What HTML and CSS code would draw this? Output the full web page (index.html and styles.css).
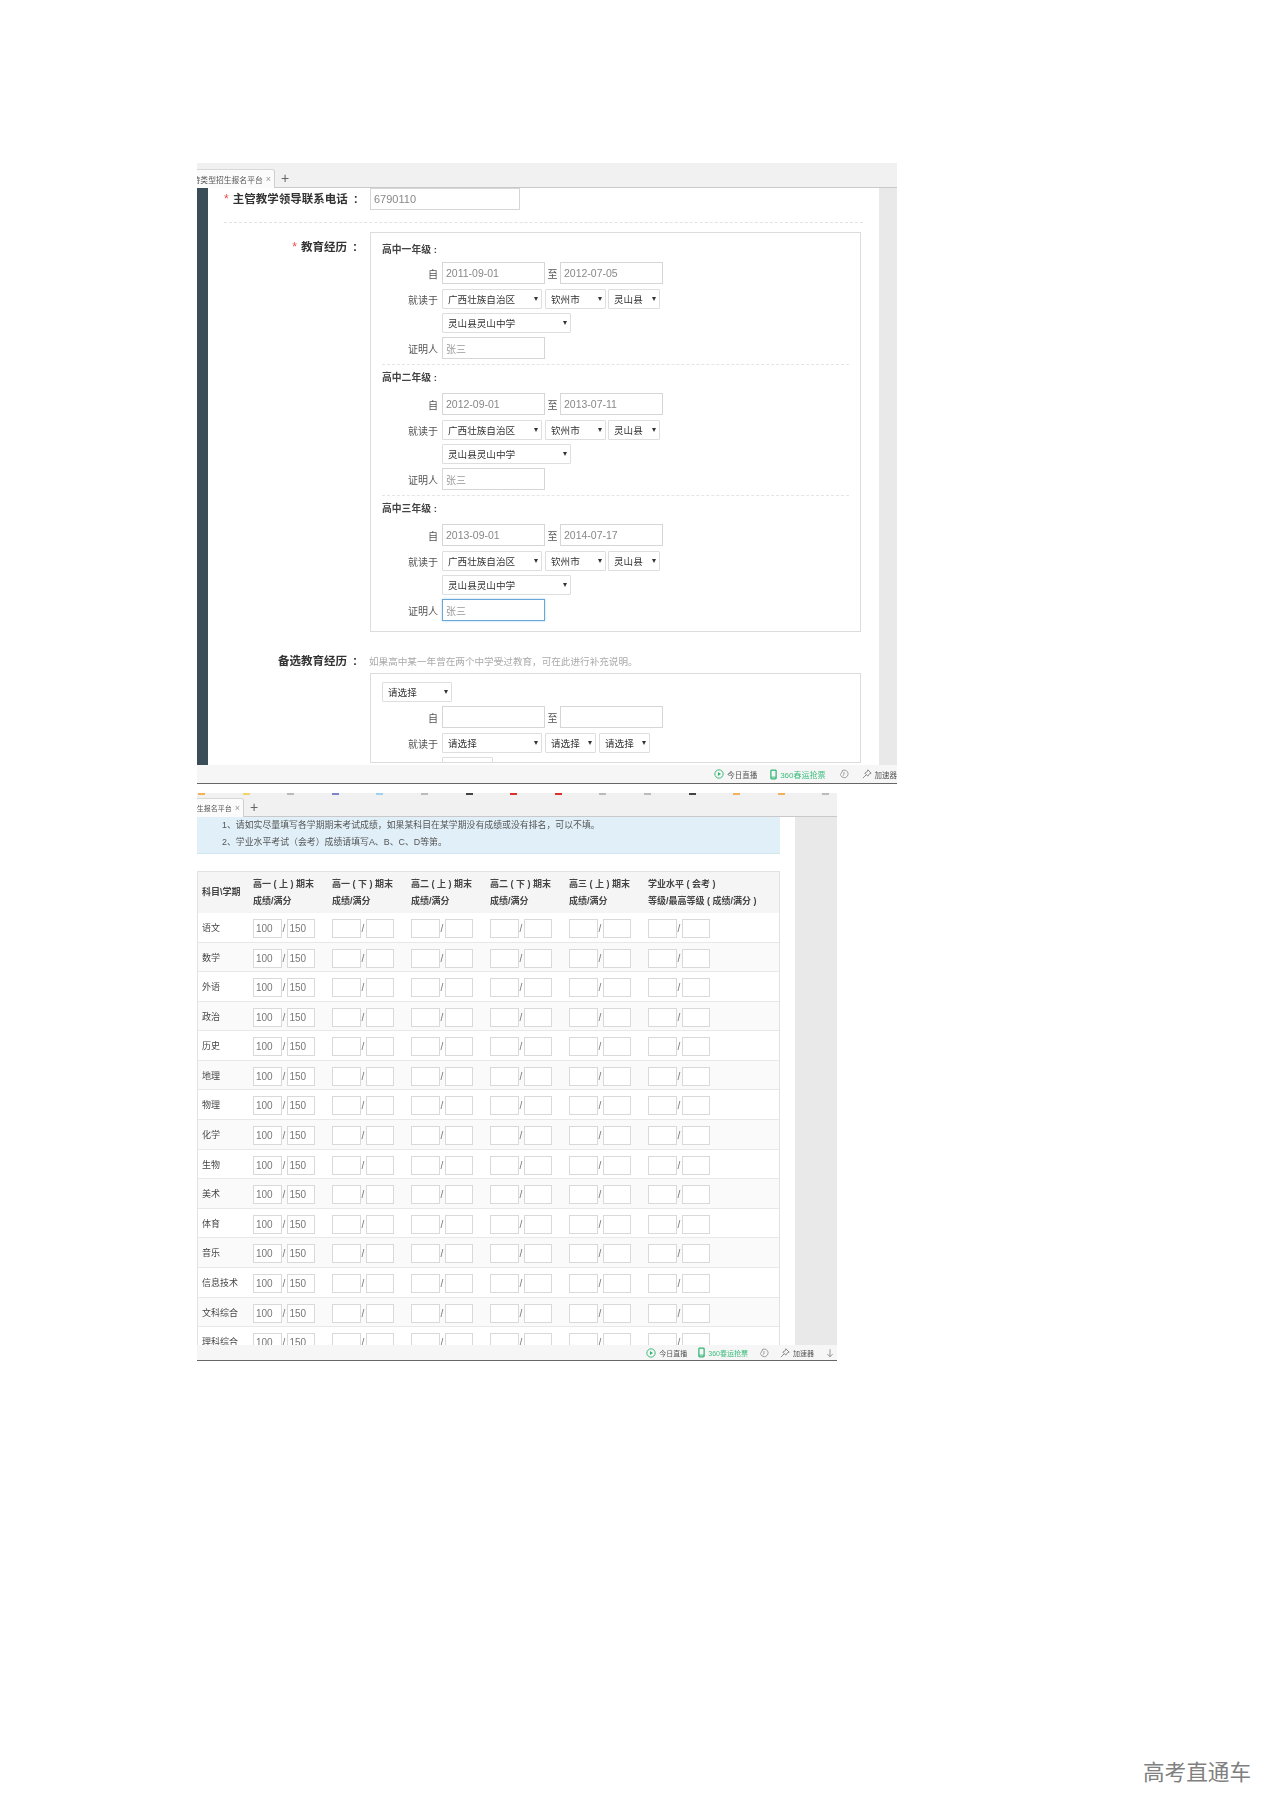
FILE: index.html
```html
<!DOCTYPE html>
<html lang="zh-CN">
<head>
<meta charset="utf-8">
<title>招生报名平台</title>
<link rel="stylesheet" href="styles.css">
</head>
<body>
<main class="page">
  <section class="shot shot-a">
    <header class="tabs">
      <div class="tab tab-a"><span class="tab-text">特类型招生报名平台</span><span class="tab-x">×</span></div>
      <span class="tab-plus">+</span>
    </header>
    <div class="viewport viewport-a">
      <div class="sidebar"></div>
      <div class="form">
        <div class="field-row">
          <div class="main-label"><span class="star">*</span>主管教学领导联系电话<span class="colon">:</span></div>
          <div class="in phone">6790110</div>
        </div>
        <hr class="rule">
        <div class="field-top">
          <div class="main-label"><span class="star">*</span>教育经历<span class="colon">:</span></div>
          <div class="box">
            <div class="grade">
              <h3 class="grade-title first">高中一年级 :</h3>
              <div class="line tall"><span class="lab">自</span><div class="in date">2011-09-01</div><span class="to">至</span><div class="in date">2012-07-05</div></div>
              <div class="line"><span class="lab">就读于</span><div class="sel w100">广西壮族自治区</div><div class="sel w60">钦州市</div><div class="sel w52">灵山县</div></div>
              <div class="line"><span class="lab"></span><div class="sel w129">灵山县灵山中学</div></div>
              <div class="line tall"><span class="lab">证明人</span><div class="in date muted">张三</div></div>
            </div>
            <hr class="inner-rule">
            <div class="grade">
              <h3 class="grade-title">高中二年级 :</h3>
              <div class="line tall"><span class="lab">自</span><div class="in date">2012-09-01</div><span class="to">至</span><div class="in date">2013-07-11</div></div>
              <div class="line"><span class="lab">就读于</span><div class="sel w100">广西壮族自治区</div><div class="sel w60">钦州市</div><div class="sel w52">灵山县</div></div>
              <div class="line"><span class="lab"></span><div class="sel w129">灵山县灵山中学</div></div>
              <div class="line tall"><span class="lab">证明人</span><div class="in date muted">张三</div></div>
            </div>
            <hr class="inner-rule">
            <div class="grade">
              <h3 class="grade-title">高中三年级 :</h3>
              <div class="line tall"><span class="lab">自</span><div class="in date">2013-09-01</div><span class="to">至</span><div class="in date">2014-07-17</div></div>
              <div class="line"><span class="lab">就读于</span><div class="sel w100">广西壮族自治区</div><div class="sel w60">钦州市</div><div class="sel w52">灵山县</div></div>
              <div class="line"><span class="lab"></span><div class="sel w129">灵山县灵山中学</div></div>
              <div class="line tall"><span class="lab">证明人</span><div class="in date muted focus">张三</div></div>
            </div>
          </div>
        </div>
        <div class="field-note">
          <div class="main-label">备选教育经历<span class="colon">:</span></div>
          <p class="note">如果高中某一年曾在两个中学受过教育，可在此进行补充说明。</p>
        </div>
        <div class="box box-alt">
          <div class="grade alt-grade">
            <div class="line"><div class="sel w70">请选择</div></div>
            <div class="line tall"><span class="lab">自</span><div class="in date"></div><span class="to">至</span><div class="in date"></div></div>
            <div class="line"><span class="lab">就读于</span><div class="sel w100">请选择</div><div class="sel w50">请选择</div><div class="sel w51">请选择</div></div>
            <div class="line"><span class="lab"></span><div class="sel w51">请选择</div></div>
          </div>
        </div>
      </div>
      <div class="gutter"></div>
    </div>
    <footer class="status status-a">
      <span class="st"><svg class="ico" viewBox="0 0 12 12"><circle cx="6" cy="6" r="5" fill="none" stroke="#2fb673" stroke-width="1.1"/><path d="M4.7 3.6 8.3 6 4.7 8.4z" fill="#2fb673"/></svg>今日直播</span>
      <span class="st green"><svg class="ico-phone" viewBox="0 0 8 12"><rect x="1" y="1" width="6" height="10" rx="1" fill="none" stroke="#2fb673" stroke-width="1.4"/><path d="M1 9h6" stroke="#2fb673" stroke-width="1"/></svg>360春运抢票</span>
      <svg class="ico" viewBox="0 0 12 12"><path d="M3.5 2.2A4.6 4.6 0 1 1 2 7.5" fill="none" stroke="#777" stroke-width=".8"/><path d="M1.5 7 4.5 2M6 3.5v3.2L4.2 8.4" fill="none" stroke="#777" stroke-width=".8"/></svg>
      <span class="st"><svg class="ico" viewBox="0 0 12 12"><path d="M7 1 11 5 9 5.6 7 8.6 3.4 5 6.4 3zM5 7 1 11" fill="none" stroke="#666" stroke-width=".9"/></svg>加速器</span>
    </footer>
  </section>

  <section class="shot shot-b">
    <div class="marks">
      <span class="mark m-orange"></span><span class="mark m-yellow"></span><span class="mark m-gray"></span><span class="mark m-blue"></span><span class="mark m-sky"></span><span class="mark m-gray"></span><span class="mark m-dark"></span><span class="mark m-red"></span><span class="mark m-red"></span><span class="mark m-gray"></span><span class="mark m-gray"></span><span class="mark m-dark"></span><span class="mark m-orange"></span><span class="mark m-orange"></span><span class="mark m-gray"></span>
    </div>
    <header class="tabs tabs-b">
      <div class="tab tab-b"><span class="tab-text">生报名平台</span><span class="tab-x">×</span></div>
      <span class="tab-plus">+</span>
    </header>
    <div class="viewport viewport-b">
      <div class="sheet">
        <div class="alert">
          <p>1、请如实尽量填写各学期期末考试成绩，如果某科目在某学期没有成绩或没有排名，可以不填。</p>
          <p>2、学业水平考试（会考）成绩请填写A、B、C、D等第。</p>
        </div>
        <div class="table">
          <div class="thead">
            <div class="th-first">科目\学期</div>
            <div>高一 ( 上 ) 期末<br>成绩/满分</div>
            <div>高一 ( 下 ) 期末<br>成绩/满分</div>
            <div>高二 ( 上 ) 期末<br>成绩/满分</div>
            <div>高二 ( 下 ) 期末<br>成绩/满分</div>
            <div>高三 ( 上 ) 期末<br>成绩/满分</div>
            <div class="th-wide">学业水平 ( 会考 )<br>等级/最高等级 ( 成绩/满分 )</div>
          </div>
          <div class="trow"><div class="subj">语文</div><div class="pair"><span class="cell">100</span><i>/</i><span class="cell">150</span></div><div class="pair"><span class="cell"></span><i>/</i><span class="cell"></span></div><div class="pair"><span class="cell"></span><i>/</i><span class="cell"></span></div><div class="pair"><span class="cell"></span><i>/</i><span class="cell"></span></div><div class="pair"><span class="cell"></span><i>/</i><span class="cell"></span></div><div class="pair"><span class="cell"></span><i>/</i><span class="cell"></span></div></div>
          <div class="trow"><div class="subj">数学</div><div class="pair"><span class="cell">100</span><i>/</i><span class="cell">150</span></div><div class="pair"><span class="cell"></span><i>/</i><span class="cell"></span></div><div class="pair"><span class="cell"></span><i>/</i><span class="cell"></span></div><div class="pair"><span class="cell"></span><i>/</i><span class="cell"></span></div><div class="pair"><span class="cell"></span><i>/</i><span class="cell"></span></div><div class="pair"><span class="cell"></span><i>/</i><span class="cell"></span></div></div>
          <div class="trow"><div class="subj">外语</div><div class="pair"><span class="cell">100</span><i>/</i><span class="cell">150</span></div><div class="pair"><span class="cell"></span><i>/</i><span class="cell"></span></div><div class="pair"><span class="cell"></span><i>/</i><span class="cell"></span></div><div class="pair"><span class="cell"></span><i>/</i><span class="cell"></span></div><div class="pair"><span class="cell"></span><i>/</i><span class="cell"></span></div><div class="pair"><span class="cell"></span><i>/</i><span class="cell"></span></div></div>
          <div class="trow"><div class="subj">政治</div><div class="pair"><span class="cell">100</span><i>/</i><span class="cell">150</span></div><div class="pair"><span class="cell"></span><i>/</i><span class="cell"></span></div><div class="pair"><span class="cell"></span><i>/</i><span class="cell"></span></div><div class="pair"><span class="cell"></span><i>/</i><span class="cell"></span></div><div class="pair"><span class="cell"></span><i>/</i><span class="cell"></span></div><div class="pair"><span class="cell"></span><i>/</i><span class="cell"></span></div></div>
          <div class="trow"><div class="subj">历史</div><div class="pair"><span class="cell">100</span><i>/</i><span class="cell">150</span></div><div class="pair"><span class="cell"></span><i>/</i><span class="cell"></span></div><div class="pair"><span class="cell"></span><i>/</i><span class="cell"></span></div><div class="pair"><span class="cell"></span><i>/</i><span class="cell"></span></div><div class="pair"><span class="cell"></span><i>/</i><span class="cell"></span></div><div class="pair"><span class="cell"></span><i>/</i><span class="cell"></span></div></div>
          <div class="trow"><div class="subj">地理</div><div class="pair"><span class="cell">100</span><i>/</i><span class="cell">150</span></div><div class="pair"><span class="cell"></span><i>/</i><span class="cell"></span></div><div class="pair"><span class="cell"></span><i>/</i><span class="cell"></span></div><div class="pair"><span class="cell"></span><i>/</i><span class="cell"></span></div><div class="pair"><span class="cell"></span><i>/</i><span class="cell"></span></div><div class="pair"><span class="cell"></span><i>/</i><span class="cell"></span></div></div>
          <div class="trow"><div class="subj">物理</div><div class="pair"><span class="cell">100</span><i>/</i><span class="cell">150</span></div><div class="pair"><span class="cell"></span><i>/</i><span class="cell"></span></div><div class="pair"><span class="cell"></span><i>/</i><span class="cell"></span></div><div class="pair"><span class="cell"></span><i>/</i><span class="cell"></span></div><div class="pair"><span class="cell"></span><i>/</i><span class="cell"></span></div><div class="pair"><span class="cell"></span><i>/</i><span class="cell"></span></div></div>
          <div class="trow"><div class="subj">化学</div><div class="pair"><span class="cell">100</span><i>/</i><span class="cell">150</span></div><div class="pair"><span class="cell"></span><i>/</i><span class="cell"></span></div><div class="pair"><span class="cell"></span><i>/</i><span class="cell"></span></div><div class="pair"><span class="cell"></span><i>/</i><span class="cell"></span></div><div class="pair"><span class="cell"></span><i>/</i><span class="cell"></span></div><div class="pair"><span class="cell"></span><i>/</i><span class="cell"></span></div></div>
          <div class="trow"><div class="subj">生物</div><div class="pair"><span class="cell">100</span><i>/</i><span class="cell">150</span></div><div class="pair"><span class="cell"></span><i>/</i><span class="cell"></span></div><div class="pair"><span class="cell"></span><i>/</i><span class="cell"></span></div><div class="pair"><span class="cell"></span><i>/</i><span class="cell"></span></div><div class="pair"><span class="cell"></span><i>/</i><span class="cell"></span></div><div class="pair"><span class="cell"></span><i>/</i><span class="cell"></span></div></div>
          <div class="trow"><div class="subj">美术</div><div class="pair"><span class="cell">100</span><i>/</i><span class="cell">150</span></div><div class="pair"><span class="cell"></span><i>/</i><span class="cell"></span></div><div class="pair"><span class="cell"></span><i>/</i><span class="cell"></span></div><div class="pair"><span class="cell"></span><i>/</i><span class="cell"></span></div><div class="pair"><span class="cell"></span><i>/</i><span class="cell"></span></div><div class="pair"><span class="cell"></span><i>/</i><span class="cell"></span></div></div>
          <div class="trow"><div class="subj">体育</div><div class="pair"><span class="cell">100</span><i>/</i><span class="cell">150</span></div><div class="pair"><span class="cell"></span><i>/</i><span class="cell"></span></div><div class="pair"><span class="cell"></span><i>/</i><span class="cell"></span></div><div class="pair"><span class="cell"></span><i>/</i><span class="cell"></span></div><div class="pair"><span class="cell"></span><i>/</i><span class="cell"></span></div><div class="pair"><span class="cell"></span><i>/</i><span class="cell"></span></div></div>
          <div class="trow"><div class="subj">音乐</div><div class="pair"><span class="cell">100</span><i>/</i><span class="cell">150</span></div><div class="pair"><span class="cell"></span><i>/</i><span class="cell"></span></div><div class="pair"><span class="cell"></span><i>/</i><span class="cell"></span></div><div class="pair"><span class="cell"></span><i>/</i><span class="cell"></span></div><div class="pair"><span class="cell"></span><i>/</i><span class="cell"></span></div><div class="pair"><span class="cell"></span><i>/</i><span class="cell"></span></div></div>
          <div class="trow"><div class="subj">信息技术</div><div class="pair"><span class="cell">100</span><i>/</i><span class="cell">150</span></div><div class="pair"><span class="cell"></span><i>/</i><span class="cell"></span></div><div class="pair"><span class="cell"></span><i>/</i><span class="cell"></span></div><div class="pair"><span class="cell"></span><i>/</i><span class="cell"></span></div><div class="pair"><span class="cell"></span><i>/</i><span class="cell"></span></div><div class="pair"><span class="cell"></span><i>/</i><span class="cell"></span></div></div>
          <div class="trow"><div class="subj">文科综合</div><div class="pair"><span class="cell">100</span><i>/</i><span class="cell">150</span></div><div class="pair"><span class="cell"></span><i>/</i><span class="cell"></span></div><div class="pair"><span class="cell"></span><i>/</i><span class="cell"></span></div><div class="pair"><span class="cell"></span><i>/</i><span class="cell"></span></div><div class="pair"><span class="cell"></span><i>/</i><span class="cell"></span></div><div class="pair"><span class="cell"></span><i>/</i><span class="cell"></span></div></div>
          <div class="trow"><div class="subj">理科综合</div><div class="pair"><span class="cell">100</span><i>/</i><span class="cell">150</span></div><div class="pair"><span class="cell"></span><i>/</i><span class="cell"></span></div><div class="pair"><span class="cell"></span><i>/</i><span class="cell"></span></div><div class="pair"><span class="cell"></span><i>/</i><span class="cell"></span></div><div class="pair"><span class="cell"></span><i>/</i><span class="cell"></span></div><div class="pair"><span class="cell"></span><i>/</i><span class="cell"></span></div></div>
        </div>
      </div>
      <div class="gutter gutter-b"></div>
    </div>
    <footer class="status status-b">
      <span class="st"><svg class="ico" viewBox="0 0 12 12"><circle cx="6" cy="6" r="5" fill="none" stroke="#2fb673" stroke-width="1.1"/><path d="M4.7 3.6 8.3 6 4.7 8.4z" fill="#2fb673"/></svg>今日直播</span>
      <span class="st green"><svg class="ico-phone" viewBox="0 0 8 12"><rect x="1" y="1" width="6" height="10" rx="1" fill="none" stroke="#2fb673" stroke-width="1.4"/><path d="M1 9h6" stroke="#2fb673" stroke-width="1"/></svg>360春运抢票</span>
      <svg class="ico" viewBox="0 0 12 12"><path d="M3.5 2.2A4.6 4.6 0 1 1 2 7.5" fill="none" stroke="#777" stroke-width=".8"/><path d="M1.5 7 4.5 2M6 3.5v3.2L4.2 8.4" fill="none" stroke="#777" stroke-width=".8"/></svg>
      <span class="st"><svg class="ico" viewBox="0 0 12 12"><path d="M7 1 11 5 9 5.6 7 8.6 3.4 5 6.4 3zM5 7 1 11" fill="none" stroke="#666" stroke-width=".9"/></svg>加速器</span>
      <svg class="ico" viewBox="0 0 12 12"><path d="M6 1.5V10.5M2.8 7.2 6 10.5 9.2 7.2" fill="none" stroke="#777" stroke-width=".9"/></svg>
    </footer>
  </section>
</main>
<footer class="watermark">高考直通车</footer>
</body>
</html>
```
FILE: styles.css
```css
* { box-sizing: border-box; }
html, body { margin: 0; padding: 0; background: #fff; }
body {
  font-family: "Liberation Sans", "Noto Sans CJK SC", sans-serif;
  color: #555;
  height: 1810px;
  overflow: hidden;
}
p, h3, hr { margin: 0; padding: 0; }

.page { padding: 163px 0 0 197px; }
.shot {
  display: flex;
  flex-direction: column;
  overflow: hidden;
  background: #fff;
  filter: blur(.35px);
}
.shot-a { width: 700px; height: 621px; }
.shot-b { width: 640px; height: 569px; margin-top: 9px; }

/* browser tab strip */
.tabs {
  flex: none;
  height: 25px;
  display: flex;
  align-items: flex-end;
  background: #f1f1f1;
  border-bottom: 1px solid #c9c9c9;
}
.tabs-b { height: 21px; }
.tab {
  height: 19px;
  display: flex;
  align-items: center;
  justify-content: flex-end;
  overflow: hidden;
  background: #fbfbfb;
  border-right: 1px solid #cfcfcf;
  border-top: 1px solid #d8d8d8;
  color: #555;
  white-space: nowrap;
  border-radius: 0 3px 0 0;
  padding-right: 3px;
  margin-bottom: -1px;
}
.tab-a { width: 78px; font-size: 7.8px; }
.tab-b { width: 47px; font-size: 7px; }
.tab-x { color: #999; margin-left: 3px; font-size: 9px; }
.tab-plus { color: #666; font-size: 14px; line-height: 18px; margin-left: 6px; }

/* bookmarks peeking at top of second shot */
.marks {
  flex: none;
  height: 3px;
  background: #f1f1f1;
  display: grid;
  grid-template-columns: repeat(15, 44.6px);
  padding-left: 1px;
}
.mark { width: 7px; height: 2px; }
.m-orange { background: #f3b25a; }
.m-yellow { background: #f4d36d; }
.m-gray { background: #bbb; }
.m-blue { background: #7f84c9; }
.m-sky { background: #9fd2ee; }
.m-dark { background: #444; }
.m-red { background: #d9342b; }

/* page area */
.viewport { flex: none; display: flex; overflow: hidden; background: #fff; }
.viewport-a { height: 577px; }
.viewport-b { height: 528px; }
.sidebar { flex: none; width: 11px; background: #3b4d57; }
.gutter { flex: none; width: 19px; margin-left: auto; background: #e9e9e9; }
.gutter-b { width: 42px; }

.form {
  flex: none;
  width: 655px;
  margin-left: 16px;
  font-size: 9.6px;
}
.field-row { display: flex; gap: 12px; align-items: center; }
.field-top { display: flex; gap: 12px; align-items: flex-start; }
.main-label {
  flex: none;
  width: 134px;
  text-align: right;
  font-size: 11.5px;
  font-weight: 700;
  color: #333;
  line-height: 18px;
  white-space: nowrap;
}
.colon { display: inline-block; width: 11px; font-size: 12px; text-align: right; padding-right: 1px; }
.field-top .main-label { padding-top: 6px; }
.star { color: #e8504f; font-size: 12px; font-weight: 400; margin-right: 4px; }

.in {
  display: flex;
  align-items: center;
  padding-left: 3px;
  border: 1px solid #d6d6d6;
  background: #fff;
  color: #888;
  font-size: 10.5px;
}
.phone { width: 150px; height: 22px; font-size: 11px; }
.rule {
  border: 0;
  border-top: 1px dashed #e3e3e3;
  width: 639px;
  margin: 12px 0 9px;
  height: 1px;
}
.box {
  width: 491px;
  border: 1px solid #dcdcdc;
  padding: 5px 11px 10px;
}
.grade-title {
  font-size: 9.8px;
  font-weight: 700;
  color: #444;
  line-height: 22px;
  padding-top: 2px;
  margin-bottom: 4px;
}
.grade-title.first { padding-top: 1px; margin-bottom: 1px; }
.inner-rule {
  border: 0;
  border-top: 1px dashed #e5e5e5;
  margin-top: 5px;
  height: 1px;
}
.line { display: flex; align-items: center; height: 20px; margin-bottom: 4px; }
.line.tall { height: 22px; margin-bottom: 5px; }
.grade .line:last-child { margin-bottom: 0; }
.lab { flex: none; width: 56px; margin-right: 4px; text-align: right; color: #555; font-size: 10px; }
.to { flex: none; width: 15px; text-align: center; color: #555; font-size: 10px; }
.date { width: 103px; height: 22px; }
.muted { font-size: 10px; color: #999; }
.focus { border-color: #6ba7d6; box-shadow: 0 0 2px #a9d0ec; }
.sel {
  flex: none;
  height: 20px;
  display: flex;
  align-items: center;
  justify-content: space-between;
  padding: 0 3px 0 5px;
  margin-right: 3px;
  border: 1px solid #dedede;
  border-radius: 1px;
  background: #fff;
  color: #333;
  font-size: 9.6px;
  white-space: nowrap;
}
.sel::after {
  content: "";
  border-left: 2px solid transparent;
  border-right: 2px solid transparent;
  border-top: 4px solid #333;
}
.w100 { width: 100px; }
.w60 { width: 60.5px; margin-right: 2.5px; }
.w52 { width: 52px; }
.w129 { width: 129px; }
.w70 { width: 70px; }
.w50 { width: 51px; margin-right: 3px; }
.w51 { width: 51px; }

.field-note { display: flex; gap: 11px; align-items: center; margin-top: 20px; height: 18px; }
.note { color: #aaa; font-size: 9.6px; white-space: nowrap; }
.box-alt { margin: 3px 0 0 146px; padding-top: 8px; padding-bottom: 0; }
.alt-grade { height: 80px; overflow: hidden; }

/* score table */
.sheet { flex: none; width: 583px; }
.alert {
  height: 37px;
  padding: 0 0 0 25px;
  background: #e1f0f8;
  border-bottom: 1px solid #d3e7f1;
  font-size: 8.9px;
  line-height: 16.5px;
  color: #555;
}
.table {
  margin-top: 17px;
  border-left: 1px solid #e2e2e2;
  border-right: 1px solid #e2e2e2;
  border-top: 1px solid #e2e2e2;
}
.thead {
  height: 41px;
  display: grid;
  grid-template-columns: 55px repeat(5, 79px) auto;
  align-items: center;
  background: #f5f5f5;
  font-size: 9px;
  font-weight: 700;
  color: #444;
  line-height: 16.6px;
  white-space: nowrap;
}
.th-first { padding-left: 4px; }
.trow {
  height: 29.58px;
  display: grid;
  grid-template-columns: 55px repeat(6, 79px);
  padding-top: 6px;
  border-bottom: 1px solid #e8e8e8;
  background: #fff;
}
.trow:nth-child(odd) { background: #fafafa; }
.subj { padding-left: 4px; font-size: 9px; line-height: 18px; color: #444; white-space: nowrap; }
.pair { display: flex; align-items: flex-start; }
.cell {
  flex: none;
  width: 28.5px;
  height: 19px;
  display: flex;
  align-items: center;
  padding-left: 2px;
  border: 1px solid #d9d9d9;
  background: #fff;
  font-size: 10px;
  color: #777;
}
.pair i {
  flex: none;
  width: 5px;
  text-align: center;
  font-style: normal;
  font-size: 10px;
  line-height: 19px;
  color: #777;
}

/* bottom status bar */
.status {
  flex: none;
  display: flex;
  align-items: center;
  justify-content: flex-end;
  background: #f6f6f6;
  border-bottom: 1px solid #666;
  color: #555;
  white-space: nowrap;
}
.status-a { height: 19px; gap: 13px; font-size: 7.5px; }
.status-a .green { font-size: 8px; }
.status-b { height: 16px; gap: 11px; padding-right: 2px; font-size: 7px; }
.st { display: flex; align-items: center; gap: 3px; }
.ico { width: 10px; height: 10px; flex: none; }
.ico-phone { width: 7px; height: 11px; flex: none; }
.green { color: #3bbd7d; }

.watermark {
  margin-top: 394px;
  padding-right: 29px;
  text-align: right;
  font-family: "Noto Sans CJK SC", sans-serif;
  font-size: 21.6px;
  line-height: 30px;
  color: #808080;
}
```
